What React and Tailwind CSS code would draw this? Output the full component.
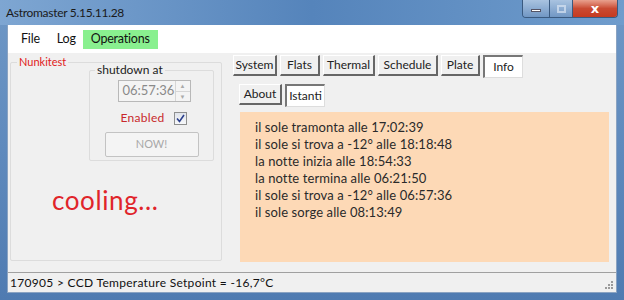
import React from 'react';

const font = { fontFamily: 'Lato, "Open Sans", sans-serif' };

const tabsTop = [
  { label: 'System', w: 'w-[44px]' },
  { label: 'Flats', w: 'w-[40px]' },
  { label: 'Thermal', w: 'w-[52px]' },
  { label: 'Schedule', w: 'w-[60px]' },
  { label: 'Plate', w: 'w-[39px]' },
];

const lines = [
  'il sole tramonta alle 17:02:39',
  'il sole si trova a -12° alle 18:18:48',
  'la notte inizia alle 18:54:33',
  'la notte termina alle 06:21:50',
  'il sole si trova a -12° alle 06:57:36',
  'il sole sorge alle 08:13:49',
];

const Tab = ({ label, w, active }) => (
  <div
    className={`${w} h-[21px] flex items-center justify-center text-[12px] text-[#222] ${
      active
        ? 'bg-white border-t-2 border-l-2 border-t-[#777] border-l-[#777] border-r border-b border-r-[#ddd] border-b-[#ddd] h-[23px]'
        : 'bg-[#f0f0f0] border-t border-l border-t-[#fff] border-l-[#fff] border-r-2 border-b-2 border-r-[#666] border-b-[#666]'
    }`}
  >
    {label}
  </div>
);

const App = () => {
  return (
    <div
      className="w-[624px] h-[300px] flex flex-col bg-gradient-to-b from-[#6f98c6] via-[#5f8abd] to-[#4f7bb1] overflow-hidden"
      style={font}
    >
      {/* title bar */}
      <div className="h-[25px] flex items-start justify-between bg-gradient-to-r from-[#7ea6d2] via-[#5584bb] to-[#6f9ccc]">
        <span className="pl-[6px] pt-[4px] text-[12px] tracking-[-0.3px] text-[#1a1a1a]">
          Astromaster 5.15.11.28
        </span>
        <div className="flex mr-[6px] h-[18px] border border-[#3a5a80] border-t-0 rounded-b-[4px] overflow-hidden">
          <div className="w-[27px] bg-gradient-to-b from-[#a9c3e0] to-[#7197c4] flex items-center justify-center border-r border-[#3a5a80]">
            <div className="w-[10px] h-[3px] bg-white border border-[#556] mt-[4px]" />
          </div>
          <div className="w-[23px] bg-gradient-to-b from-[#a9c3e0] to-[#7197c4] flex items-center justify-center border-r border-[#3a5a80]">
            <div className="w-[9px] h-[8px] border-2 border-[#d8e4f2] opacity-70" />
          </div>
          <div className="w-[44px] bg-gradient-to-b from-[#e8a08e] via-[#c94a32] to-[#c53a1f] flex items-center justify-center text-white text-[13px] font-bold" style={{ fontFamily: '"DejaVu Sans", sans-serif' }}>
            x
          </div>
        </div>
      </div>

      {/* client */}
      <div className="flex-1 mx-[7px] flex flex-col bg-[#f0f0f0] border border-[#8aa3c2] border-t-0">
        {/* menu */}
        <div className="h-[28px] bg-white flex items-center pl-[13px] text-[12.5px] tracking-[-0.2px] text-[#111]">
          <span>File</span>
          <span className="ml-[17px]">Log</span>
          <span className="ml-[7px] h-[19px] px-[8px] bg-[#89f08f] flex items-center">Operations</span>
        </div>

        {/* body */}
        <div className="flex-1 flex bg-[#f0f0f0] pt-[1px]">
          {/* left group */}
          <div className="w-[222px] pl-[2px] pt-[8px] pb-[11px]">
            <div className="relative h-full w-[212px] border border-[#dcdcdc] rounded-[2px]">
              <span className="absolute -top-[8px] left-[6px] bg-[#f0f0f0] px-[2px] text-[11px] leading-[14px] text-[#e02020]">
                Nunkitest
              </span>
              <div className="ml-[78px] mt-[7px] w-[125px] h-[91px] relative border border-[#dcdcdc] rounded-[2px] flex flex-col items-center">
                <span className="absolute -top-[8px] left-[5px] bg-[#f0f0f0] px-[2px] text-[12px] leading-[14px] text-[#222]">
                  shutdown at
                </span>
                <div className="mt-[9px] ml-[5px] w-[73px] h-[22px] bg-[#f4f4f4] border border-[#b8b8b8] flex items-center">
                  <span className="pl-[4px] text-[13px] text-[#8a8a8a] flex-1">06:57:36</span>
                  <div className="w-[15px] h-full flex flex-col border-l border-[#d6d6d6]">
                    <div className="flex-1 flex items-center justify-center text-[6px] text-[#aaa] border-b border-[#d6d6d6]">▲</div>
                    <div className="flex-1 flex items-center justify-center text-[6px] text-[#aaa]">▼</div>
                  </div>
                </div>
                <div className="mt-[7px] ml-[4px] flex items-center">
                  <span className="text-[12px] text-[#c8282c] tracking-[0.3px]">Enabled</span>
                  <div className="ml-[9px] w-[13px] h-[13px] border border-[#8e8f8f] bg-gradient-to-b from-[#dfe3ea] to-[#f7f8fa] flex items-center justify-center">
                    <svg width="9" height="9" viewBox="0 0 9 9">
                      <path d="M1 4.5 L3.5 7.5 L8 1" fill="none" stroke="#2b3f8c" strokeWidth="1.6" />
                    </svg>
                  </div>
                </div>
                <div className="mt-[5px] w-[94px] h-[25px] border border-[#c3c3c3] rounded-[2px] bg-[#f4f4f4] flex items-center justify-center text-[11px] text-[#a8a8a8]">
                  NOW!
                </div>
              </div>
              <div className="mt-[24px] ml-[41px] text-[26px] tracking-[0.6px] text-[#e0242a] leading-[30px]">cooling...</div>
            </div>
          </div>

          {/* right: tabs */}
          <div className="flex-1 flex flex-col pl-[3px] pr-[7px]">
            <div className="flex items-start gap-[3px] mt-[1px] h-[25px]">
              {tabsTop.map((t) => (
                <Tab key={t.label} {...t} />
              ))}
              <Tab label="Info" w="w-[40px]" active />
            </div>
            <div className="flex items-start gap-[3px] ml-[6px] mt-[4px] h-[24px]">
              <Tab label="About" w="w-[43px]" />
              <Tab label="Istanti" w="w-[40px]" active />
            </div>
            <div className="ml-[7px] mt-[4px] h-[150px] bg-[#fdd9b6] pt-[7px] pl-[15px]">
              {lines.map((l) => (
                <div key={l} className="text-[13px] leading-[17px] text-[#2a2a2a] tracking-[0.1px]">
                  {l}
                </div>
              ))}
            </div>
          </div>
        </div>

        {/* status */}
        <div className="h-[20px] border-t border-[#a0a0a0] flex items-center pl-[2px] text-[12px] tracking-[0.3px] text-[#111] relative">
          170905 &gt; CCD Temperature Setpoint = -16,7°C
          <div className="absolute right-[3px] bottom-[3px] grid grid-cols-3 gap-[1px]">
            {[0, 0, 1, 0, 1, 1, 1, 1, 1].map((v, i) => (
              <div key={i} className={`w-[2px] h-[2px] ${v ? 'bg-[#9a9a9a]' : ''}`} />
            ))}
          </div>
        </div>
      </div>
      <div className="h-[7px]" />
    </div>
  );
};

export default App;
